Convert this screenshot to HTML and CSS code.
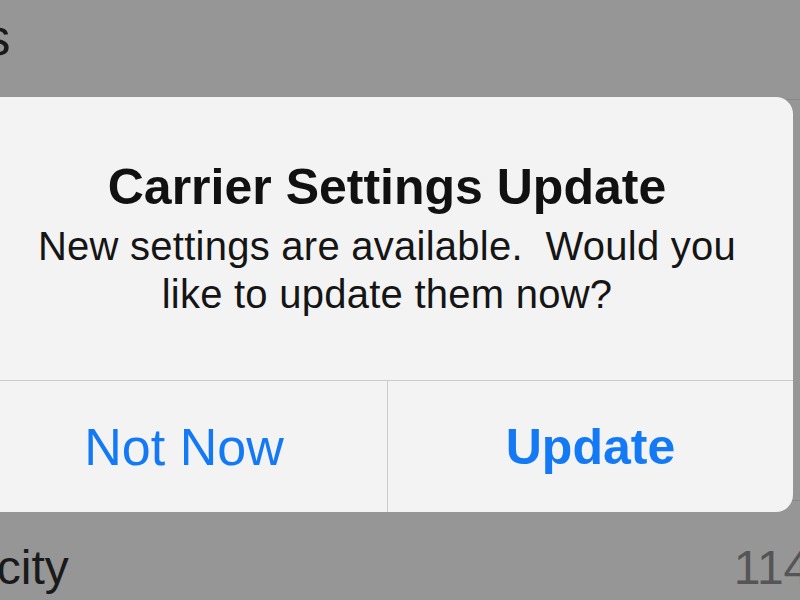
FILE: index.html
```html
<!DOCTYPE html>
<html lang="en">
<head>
  <meta charset="UTF-8">
  <title>About</title>
  <meta name="viewport" content="width=device-width, initial-scale=1.0">
  <link rel="stylesheet" href="styles.css">
</head>
<body>
  <div class="list">
    <div class="row row-top">
      <span class="label label-apps">Applications</span>
    </div>
    <div class="row row-mid">
      <span class="label">Available</span>
    </div>
    <div class="row row-bottom">
      <span class="label label-capacity">Capacity</span>
      <span class="value">114 GB</span>
    </div>
  </div>

  <div class="alert">
    <div class="alert-body">
      <h2 class="alert-title">Carrier Settings Update</h2>
      <p class="alert-message">New settings are available.&nbsp; Would you like to update them now?</p>
    </div>
    <div class="alert-actions">
      <button class="alert-btn">Not Now</button>
      <button class="alert-btn alert-btn-primary">Update</button>
    </div>
  </div>
</body>
</html>
```

FILE: styles.css
```css
html, body {
  width: 800px;
  height: 600px;
}

body {
  margin: 0;
  overflow: hidden;
  position: relative;
  font-family: 'Liberation Sans', Arial, Helvetica, sans-serif;
  background: #969696;
  color: #1a1a1a;
}

.list {
  display: flex;
  flex-direction: column;
}

.row {
  display: flex;
  justify-content: space-between;
  box-sizing: border-box;
  border-bottom: 1px solid #888;
  white-space: nowrap;
}

.row-top {
  height: 100px;
  padding-top: 7px;
  font-size: 52px;
  line-height: 60px;
}

.row-mid {
  height: 401px;
  font-size: 48px;
}

.row-bottom {
  height: 120px;
  padding-top: 39px;
  font-size: 48px;
  line-height: 56px;
  border-bottom: none;
}

.label-apps {
  margin-left: -270px;
}

.label-capacity {
  margin-left: -118px;
}

.value {
  color: #555;
  margin-right: -93px;
}

/* alert sits over the settings list */
.alert {
  position: absolute;
  left: -19px;
  top: 97px;
  width: 812px;
  height: 415px;
  display: flex;
  flex-direction: column;
  background: #f3f3f3;
  border-radius: 17px;
  overflow: hidden;
}

.alert-body {
  flex: 1;
  padding-top: 61px;
  text-align: center;
}

.alert-title {
  margin: 0;
  font-size: 50px;
  line-height: 58px;
  font-weight: bold;
  color: #111;
}

.alert-message {
  margin: 6px 0 0;
  padding: 0 30px;
  font-size: 40px;
  line-height: 48px;
  letter-spacing: 0.25px;
  color: #151515;
}

.alert-actions {
  height: 131px;
  display: grid;
  grid-template-columns: 1fr 1fr;
  border-top: 1px solid #cbcbcb;
}

.alert-btn {
  border: none;
  background: transparent;
  font-family: inherit;
  font-size: 52px;
  color: #1479f5;
  padding: 0;
  cursor: pointer;
}

.alert-btn-primary {
  font-size: 50px;
  font-weight: bold;
  border-left: 1px solid #cbcbcb;
}
```
